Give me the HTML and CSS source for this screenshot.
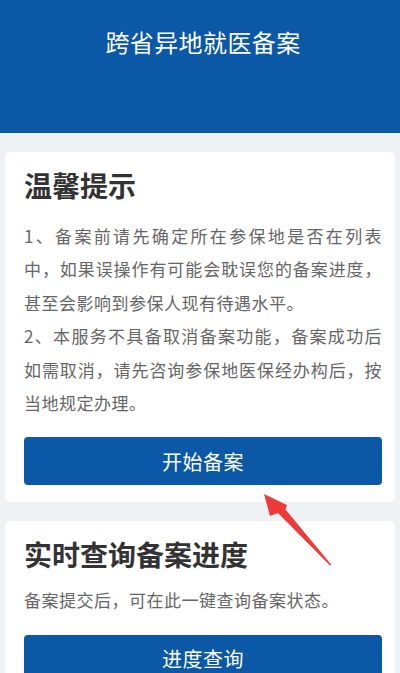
FILE: index.html
```html
<!DOCTYPE html>
<html lang="zh-CN">
<head>
<meta charset="utf-8"/>
<title>跨省异地就医备案</title>
<link rel="stylesheet" href="styles.css">
</head>
<body>
<div class="header">
  <h1 class="header-title">跨省异地就医备案</h1>
</div>

<div class="card card-tips">
  <h2 class="card-title">温馨提示</h2>
  <div class="tips">
    <p>1、备案前请先确定所在参保地是否在列表中，如果误操作有可能会耽误您的备案进度，甚至会影响到参保人现有待遇水平。</p>
    <p>2、本服务不具备取消备案功能，备案成功后如需取消，请先咨询参保地医保经办构后，按当地规定办理。</p>
  </div>
  <button class="btn">开始备案</button>
</div>

<div class="card card-query">
  <h2 class="card-title">实时查询备案进度</h2>
  <p class="sub">备案提交后，可在此一键查询备案状态。</p>
  <button class="btn">进度查询</button>
</div>

<svg class="arrow" width="75" height="80" viewBox="0 0 75 80">
  <polygon points="4,4 27,15 25.5,19.5 71.5,75 70,75.5 18,23 10,26" fill="#f03a3a"/>
</svg>
</body>
</html>
```

FILE: styles.css
```css
html, body {
    margin: 0;
    padding: 0;
}
body {
    font-family: "Noto Sans CJK SC", "Noto Sans", sans-serif;
    background-color: #eef2f4;
    color: #333;
    position: relative;
    height: 673px;
    overflow: hidden;
}
.header {
    background-color: #0a58a6;
    height: 133px;
    box-sizing: border-box;
    padding-top: 25px;
}
.header-title {
    margin: 0;
    color: #fff;
    font-size: 24px;
    font-weight: normal;
    letter-spacing: 0.4px;
    line-height: 34px;
    text-align: center;
    padding-left: 6px;
}
.card {
    background: #fff;
    margin: 19px 5px 0;
    border-radius: 6px;
    padding: 13px 13px 17px 19px;
}
.card-title {
    margin: 0;
    font-size: 28px;
    font-weight: bold;
    line-height: 40px;
    color: #333;
}
.tips {
    margin-top: 14px;
}
.tips p, .sub {
    margin: 0;
    font-size: 17px;
    letter-spacing: 0.5px;
    line-height: 33.4px;
    color: #666;
    text-align: justify;
}
.sub {
    margin-top: 9px;
}
.btn {
    display: block;
    width: 100%;
    height: 48px;
    margin-top: 18px;
    border: none;
    border-radius: 4px;
    background-color: #0a58a6;
    color: #fff;
    font-family: inherit;
    font-size: 20px;
    letter-spacing: 0.5px;
}
.arrow {
    position: absolute;
    left: 260px;
    top: 490px;
}
```
